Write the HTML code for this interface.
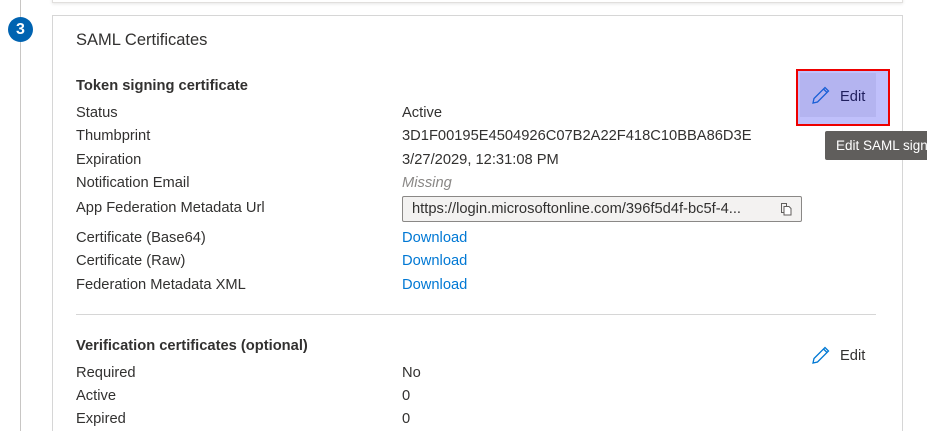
<!DOCTYPE html><html><head><style>
html,body{margin:0;width:927px;height:431px;overflow:hidden}
body{background:#fff;font-family:"Liberation Sans",sans-serif;color:#323130;position:relative}
.a{position:absolute;white-space:nowrap;font-size:14.7px}
.l{left:76px}.v{left:402px}
.lnk{color:#0078d4}
</style></head><body>
<div style="position:absolute;left:20px;top:0;width:1px;height:431px;background:#c8c6c4"></div>
<div style="position:absolute;left:52px;top:-10px;width:849px;height:11px;border:1px solid #e1dfdd;box-shadow:0 1px 3px rgba(0,0,0,.1)"></div>
<div style="position:absolute;left:8px;top:17px;width:25px;height:25px;border-radius:50%;background:#0063b1;color:#fff;font-weight:bold;font-size:16px;text-align:center;line-height:25px">3</div>
<div style="position:absolute;left:52px;top:15px;width:849px;height:420px;border:1px solid #d6d6d6"></div>
<div class="a l" style="top:31px;font-size:16.5px">SAML Certificates</div>
<div class="a l" style="top:78px;font-weight:bold">Token signing certificate</div>
<div class="a l" style="top:105px">Status</div><div class="a v" style="top:105px">Active</div>
<div class="a l" style="top:128px">Thumbprint</div><div class="a v" style="top:128px">3D1F00195E4504926C07B2A22F418C10BBA86D3E</div>
<div class="a l" style="top:152px">Expiration</div><div class="a v" style="top:152px">3/27/2029, 12:31:08 PM</div>
<div class="a l" style="top:175px">Notification Email</div><div class="a v" style="top:175px;color:#8a8886;font-style:italic">Missing</div>
<div class="a l" style="top:200px">App Federation Metadata Url</div>
<div style="position:absolute;left:402px;top:196px;width:398px;height:24px;border:1px solid #8a8886;border-radius:2px;background:#f3f2f1"></div>
<div class="a" style="left:412px;top:201px">https://login.microsoftonline.com/396f5d4f-bc5f-4...</div>
<svg style="position:absolute;left:779px;top:202px" width="14" height="14" viewBox="0 0 14 14" fill="none" stroke="#605e5c"><path d="M2.5 1.5h5v9h-5z"/><path d="M5 4.5h5l2 2v6.5h-7z" fill="#fff"/></svg>
<div class="a l" style="top:230px">Certificate (Base64)</div><div class="a v lnk" style="top:230px">Download</div>
<div class="a l" style="top:253px">Certificate (Raw)</div><div class="a v lnk" style="top:253px">Download</div>
<div class="a l" style="top:277px">Federation Metadata XML</div><div class="a v lnk" style="top:277px">Download</div>
<div style="position:absolute;left:76px;top:314px;width:800px;height:1px;background:#d6d6d6"></div>
<div class="a l" style="top:338px;font-weight:bold">Verification certificates (optional)</div>
<div class="a l" style="top:365px">Required</div><div class="a v" style="top:365px">No</div>
<div class="a l" style="top:388px">Active</div><div class="a v" style="top:388px">0</div>
<div class="a l" style="top:411px">Expired</div><div class="a v" style="top:411px">0</div>
<div style="position:absolute;left:796px;top:69px;width:90px;height:53px;border:2px solid #e00;background:#c0c0fb"></div>
<div style="position:absolute;left:800px;top:73px;width:76px;height:44px;background:#b4b4f0"></div>
<svg style="position:absolute;left:811px;top:85px" width="20" height="20" viewBox="0 0 20 20" fill="none" stroke="#1a5fd6" stroke-width="1.3"><path d="M2 18l1-4.5L14 2.5l3.5 3.5L6.5 17z M12.5 4l3.5 3.5"/></svg>
<div class="a" style="left:840px;top:89px;color:#201f5e">Edit</div>
<svg style="position:absolute;left:811px;top:345px" width="20" height="20" viewBox="0 0 20 20" fill="none" stroke="#0078d4" stroke-width="1.3"><path d="M2 18l1-4.5L14 2.5l3.5 3.5L6.5 17z M12.5 4l3.5 3.5"/></svg>
<div class="a" style="left:840px;top:348px">Edit</div>
<div style="position:absolute;left:825px;top:131px;width:110px;height:29px;background:#605e5c;border-radius:2px"></div>
<div class="a" style="left:836px;top:138px;color:#fff;font-size:13.5px">Edit SAML signing</div>
</body></html>
